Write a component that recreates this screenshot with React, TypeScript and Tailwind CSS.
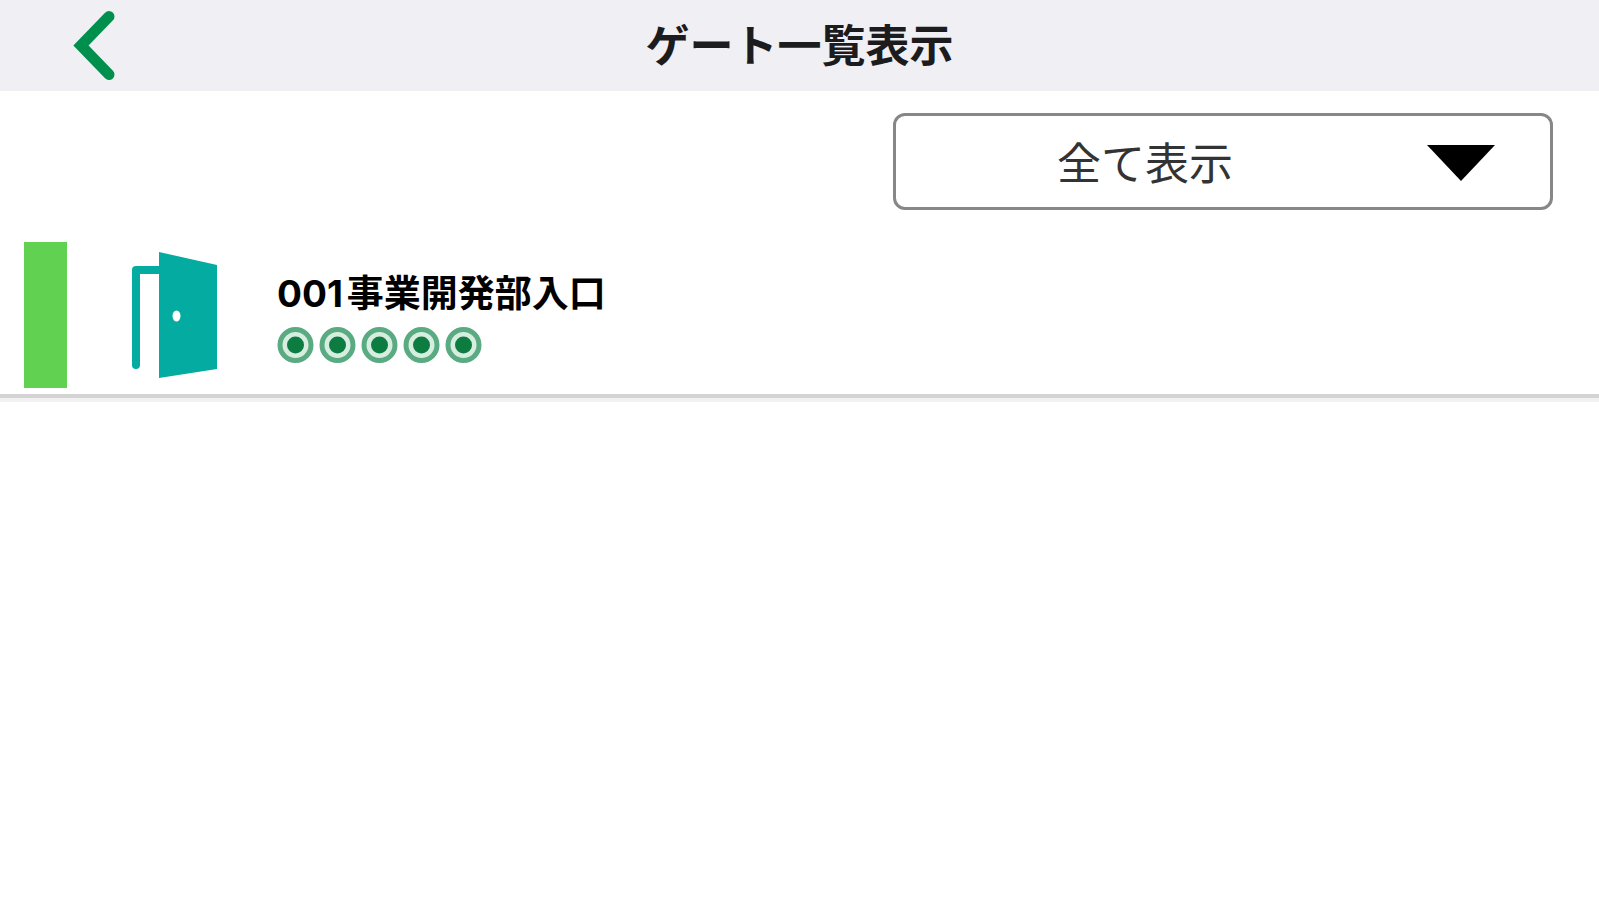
import { useState } from "react";

interface Gate {
  id: string;
  name: string;
  signal: number;
}

const gates: Gate[] = [{ id: "001", name: "事業開発部入口", signal: 5 }];

function BackIcon() {
  return (
    <svg width="44" height="72" viewBox="0 0 44 72" fill="none" aria-hidden="true">
      <path d="M37 6.500L9 35.500L37 64.500" stroke="#008f4c" strokeWidth="11" strokeLinecap="round" strokeLinejoin="miter" />
    </svg>
  );
}

function DoorIcon() {
  return (
    <svg className="shrink-0" width="88" height="128" viewBox="0 0 88 128" aria-hidden="true">
      <path d="M32 19H6V114" fill="none" stroke="#03aba0" strokeWidth="8" strokeLinecap="round" strokeLinejoin="round" />
      <path d="M29 1L87 14V118L29 127Z" fill="#03aba0" />
      <ellipse cx="46.500" cy="65" rx="4" ry="5.500" fill="#fff" />
    </svg>
  );
}

function SignalDot() {
  return (
    <svg width="37" height="38" viewBox="0 0 37 38" aria-hidden="true">
      <circle cx="18.500" cy="19" r="15.500" fill="#d6eddf" stroke="#5aaa82" strokeWidth="5" />
      <circle cx="18.500" cy="19" r="8.500" fill="#0d7c40" />
    </svg>
  );
}

export default function App() {
  const [filter, setFilter] = useState("all");

  return (
    <div className="min-h-screen bg-white text-black font-['Inter','Noto_Sans_CJK_JP',sans-serif]">
      <header className="grid h-[91px] grid-cols-[1fr_auto_1fr] items-center bg-[#f0eff4]">
        <button type="button" aria-label="戻る" className="ml-[72px] justify-self-start">
          <BackIcon />
        </button>
        <h1 className="text-[44px] leading-[64px] font-bold text-[#1c1c1e]">ゲート一覧表示</h1>
      </header>

      <main>
        <div className="flex justify-end pt-[22px] pr-[46px] pb-8">
          <div className="relative w-[660px] max-w-full">
            <select
              aria-label="表示するゲート"
              value={filter}
              onChange={(e) => setFilter(e.target.value)}
              className="block h-[97px] w-full appearance-none rounded-xl border-3 border-[#888686] bg-white pt-1 pr-[156px] text-center text-[44px] text-[#333] [text-align-last:center]"
            >
              <option value="all">全て表示</option>
            </select>
            <svg
              className="pointer-events-none absolute top-8 right-[58px]"
              width="68"
              height="36"
              viewBox="0 0 68 36"
              aria-hidden="true"
            >
              <path d="M0 0H68L34 36Z" fill="#000" />
            </svg>
          </div>
        </div>

        <ul>
          {gates.map((gate) => (
            <li key={gate.id} className="flex border-b-4 border-[#d4d4d4] pb-1.5 pl-6 shadow-[0_4px_0_#f1f1f1]">
              <div className="h-[146px] w-[43px] shrink-0 bg-[#60d151]" />
              <div className="ml-[63px] flex items-center">
                <DoorIcon />
              </div>
              <div className="ml-[59px] flex flex-col justify-center gap-2 pt-1">
                <h2 className="text-[37px] leading-[48px] font-bold">
                  <span className="mr-1">{gate.id}</span>
                  {gate.name}
                </h2>
                <div className="flex gap-[5px]" role="img" aria-label={`電波強度 ${gate.signal}`}>
                  {Array.from({ length: gate.signal }, (_, i) => (
                    <SignalDot key={i} />
                  ))}
                </div>
              </div>
            </li>
          ))}
        </ul>
      </main>
    </div>
  );
}
